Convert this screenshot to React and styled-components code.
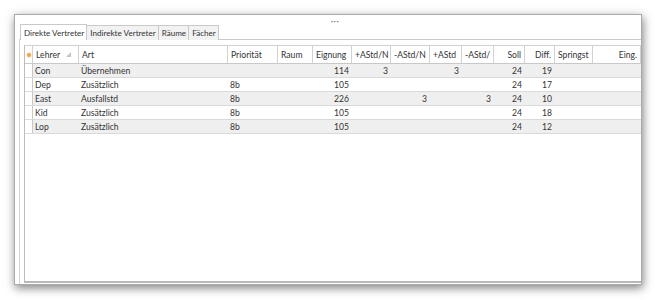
import React from "react";
import styled, { createGlobalStyle } from "styled-components";

const GlobalStyle = createGlobalStyle`
  html, body {
    margin: 0;
    padding: 0;
    background: #ffffff;
  }
  body {
    font-family: Lato, "Open Sans", sans-serif;
    font-size: 8.6px;
    color: #333;
  }
`;

const columns = [
  { key: "ind", label: "", width: 8 },
  { key: "lehrer", label: "Lehrer", width: 46, sort: true },
  { key: "art", label: "Art", width: 149 },
  { key: "prio", label: "Priorität", width: 50 },
  { key: "raum", label: "Raum", width: 35 },
  { key: "eig", label: "Eignung", width: 39, right: true, headLeft: true },
  { key: "pn", label: "+AStd/N", width: 39, right: true, headLeft: true },
  { key: "mn", label: "-AStd/N", width: 39, right: true, headLeft: true },
  { key: "p", label: "+AStd", width: 32, right: true, headLeft: true },
  { key: "m", label: "-AStd/", width: 32, right: true, headLeft: true },
  { key: "soll", label: "Soll", width: 31, right: true },
  { key: "diff", label: "Diff.", width: 30, right: true },
  { key: "spr", label: "Springst", width: 38, headLeft: true },
  { key: "eing", label: "Eing.", width: 48, right: true },
];

const template = columns.map((c) => `${c.width}px`).join(" ");

const rows = [
  { lehrer: "Con", art: "Übernehmen", eig: "114", pn: "3", p: "3", soll: "24", diff: "19" },
  { lehrer: "Dep", art: "Zusätzlich", prio: "8b", eig: "105", soll: "24", diff: "17" },
  { lehrer: "East", art: "Ausfallstd", prio: "8b", eig: "226", mn: "3", m: "3", soll: "24", diff: "10" },
  { lehrer: "Kid", art: "Zusätzlich", prio: "8b", eig: "105", soll: "24", diff: "18" },
  { lehrer: "Lop", art: "Zusätzlich", prio: "8b", eig: "105", soll: "24", diff: "12" },
];

const tabs = ["Direkte Vertreter", "Indirekte Vertreter", "Räume", "Fächer"];

function App() {
  return (
    <>
      <GlobalStyle />
      <Page>
        <Window>
          <TopBar>
            <Dots>•••</Dots>
          </TopBar>
          <Body>
            <TabStrip>
              {tabs.map((t, i) => (
                <Tab key={t} active={i === 0}>
                  {t}
                </Tab>
              ))}
            </TabStrip>
            <Panel>
              <Grid>
                <HeadRow>
                  {columns.map((c) => (
                    <HeadCell key={c.key} right={c.right && !c.headLeft}>
                      {c.key === "ind" ? <Marker /> : c.label}
                      {c.sort && <SortMark />}
                    </HeadCell>
                  ))}
                </HeadRow>
                {rows.map((r, i) => (
                  <Row key={r.lehrer} shaded={i % 2 === 0}>
                    {columns.map((c) => (
                      <Cell key={c.key} right={c.right} ind={c.key === "ind"}>
                        {r[c.key] || ""}
                      </Cell>
                    ))}
                  </Row>
                ))}
              </Grid>
            </Panel>
          </Body>
        </Window>
      </Page>
    </>
  );
}

const Page = styled.div`
  width: 655px;
  height: 300px;
  padding: 14px 0 0 14px;
  box-sizing: border-box;
`;

const Window = styled.div`
  width: 628px;
  height: 271px;
  background: #ffffff;
  border: 1px solid #aaaaaa;
  box-sizing: border-box;
  box-shadow: 1px 3px 9px rgba(0, 0, 0, 0.5);
  display: flex;
  flex-direction: column;
`;

const TopBar = styled.div`
  height: 9px;
  display: flex;
  justify-content: center;
  padding-left: 14px;
`;

const Dots = styled.span`
  font-size: 4px;
  letter-spacing: 0.5px;
  color: #777;
  line-height: 9px;
  padding-top: 2px;
`;

const Body = styled.div`
  flex: 1;
  display: flex;
  flex-direction: column;
  padding-left: 4px;
`;

const TabStrip = styled.div`
  display: flex;
  height: 16px;
  padding-left: 1px;
  align-items: flex-end;
`;

const Tab = styled.div`
  height: ${(p) => (p.active ? "16px" : "15px")};
  line-height: ${(p) => (p.active ? "16px" : "15px")};
  padding: 0 2px 0 3px;
  font-size: 8.1px;
  border: 1px solid #c9c9c9;
  border-bottom: none;
  margin-left: ${(p) => (p.active ? "0" : "-1px")};
  background: ${(p) => (p.active ? "#ffffff" : "#f2f2f2")};
  color: #333;
  white-space: nowrap;
  box-sizing: border-box;
  position: relative;
  z-index: ${(p) => (p.active ? 1 : 0)};
`;

const Panel = styled.div`
  flex: 1;
  border-left: 1px solid #d4d4d4;
  border-top: 1px solid #c9c9c9;
  padding: 5px 0 1px 4px;
  margin-top: -1px;
  display: flex;
`;

const Grid = styled.div`
  flex: 1;
  border-left: 1px solid #bdbdbd;
  border-top: 1px solid #d0d0d0;
  border-bottom: 2px solid #b8b8b8;
  display: flex;
  flex-direction: column;
`;

const HeadRow = styled.div`
  display: grid;
  grid-template-columns: ${template};
  height: 18px;
  border-bottom: 1px solid #c8c8c8;
  box-sizing: border-box;
`;

const HeadCell = styled.div`
  display: flex;
  align-items: center;
  justify-content: ${(p) => (p.right ? "flex-end" : "flex-start")};
  padding: 0 3px;
  border-right: 1px solid #d2d2d2;
  white-space: nowrap;
  overflow: hidden;
  color: #333;
  &:first-child {
    padding: 0;
    justify-content: center;
  }
`;

const Marker = styled.span`
  width: 4px;
  height: 4px;
  border-radius: 50%;
  background: #f7a13a;
  box-shadow: 0 0 2px #f7c27a;
`;

const SortMark = styled.span`
  margin-left: 6px;
  width: 0;
  height: 0;
  border-left: 5px solid transparent;
  border-bottom: 5px solid #c4c4c4;
`;

const Row = styled.div`
  display: grid;
  grid-template-columns: ${template};
  height: 14px;
  background: ${(p) => (p.shaded ? "#efefef" : "#ffffff")};
  border-bottom: 1px solid #dadada;
  box-sizing: border-box;
`;

const Cell = styled.div`
  display: flex;
  align-items: center;
  justify-content: ${(p) => (p.right ? "flex-end" : "flex-start")};
  padding: 0 ${(p) => (p.right ? "3px" : "2px")};
  white-space: nowrap;
  overflow: hidden;
  color: #333;
  border-right: ${(p) => (p.ind ? "1px solid #c8c8c8" : "none")};
  background: ${(p) => (p.ind ? "#ffffff" : "transparent")};
`;

export default App;
